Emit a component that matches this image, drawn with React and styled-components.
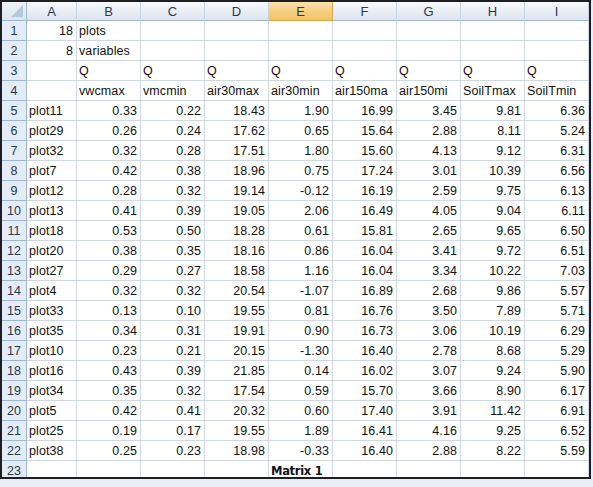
import React from "react";
import styled, { createGlobalStyle } from "styled-components";

const Global = createGlobalStyle`
  html, body { margin: 0; padding: 0; background: #e9eef6; }
  body { font-family: "Liberation Sans", Arial, sans-serif; }
`;

const Frame = styled.div`
  width: 587px;
  height: 475px;
  border: 2px solid #1e1e24;
  overflow: hidden;
  background: #fff;
`;

const Grid = styled.div`
  display: grid;
  grid-template-columns: 25px 50px repeat(8, 64px);
  grid-template-rows: 19px;
  grid-auto-rows: 20px;
`;

const ColHead = styled.div`
  box-sizing: border-box;
  border-right: 1px solid ${(p) => (p.$sel ? "#e2a73f" : "#c5d2e2")};
  border-bottom: 1px solid ${(p) => (p.$sel ? "#e2a73f" : "#9eb6ce")};
  background: ${(p) =>
    p.$sel
      ? "linear-gradient(#fbe2ae, #f6cd7e 55%, #f3c469)"
      : "linear-gradient(#f7f9fc, #e9eef5 55%, #dde4ee)"};
  color: #2a3a4d;
  font-size: 13px;
  display: flex;
  align-items: center;
  justify-content: center;
`;

const Corner = styled.div`
  box-sizing: border-box;
  border-right: 1px solid #9eb6ce;
  border-bottom: 1px solid #9eb6ce;
  background: linear-gradient(#eef2f8, #dde5ef);
  position: relative;
  &::after {
    content: "";
    position: absolute;
    right: 3px;
    bottom: 3px;
    width: 0;
    height: 0;
    border-left: 12px solid transparent;
    border-bottom: 12px solid #b7c8da;
  }
`;

const RowHead = styled.div`
  box-sizing: border-box;
  border-right: 1px solid #9eb6ce;
  border-bottom: 1px solid #9eb6ce;
  background: #e4ecf7;
  color: #2a3a4d;
  font-size: 12.5px;
  display: flex;
  align-items: center;
  justify-content: center;
`;

const Cell = styled.div`
  box-sizing: border-box;
  border-right: 1px solid #d0d7e5;
  border-bottom: 1px solid #d0d7e5;
  color: #111;
  font-size: ${(p) => (p.$bold ? "11.5px" : "12.5px")};
  font-weight: ${(p) => (p.$bold ? 700 : 400)};
  font-family: ${(p) =>
    p.$bold ? '"DejaVu Sans", Verdana, sans-serif' : '"Liberation Sans", Arial, sans-serif'};
  letter-spacing: ${(p) => (p.$bold ? "-0.3px" : "0.1px")};
  display: flex;
  align-items: center;
  justify-content: ${(p) => (p.$num ? "flex-end" : "flex-start")};
  padding: 0 3px 0 2px;
  white-space: nowrap;
  overflow: visible;
`;

const cols = ["A", "B", "C", "D", "E", "F", "G", "H", "I"];

const data = [
  ["plot11", "0.33", "0.22", "18.43", "1.90", "16.99", "3.45", "9.81", "6.36"],
  ["plot29", "0.26", "0.24", "17.62", "0.65", "15.64", "2.88", "8.11", "5.24"],
  ["plot32", "0.32", "0.28", "17.51", "1.80", "15.60", "4.13", "9.12", "6.31"],
  ["plot7", "0.42", "0.38", "18.96", "0.75", "17.24", "3.01", "10.39", "6.56"],
  ["plot12", "0.28", "0.32", "19.14", "-0.12", "16.19", "2.59", "9.75", "6.13"],
  ["plot13", "0.41", "0.39", "19.05", "2.06", "16.49", "4.05", "9.04", "6.11"],
  ["plot18", "0.53", "0.50", "18.28", "0.61", "15.81", "2.65", "9.65", "6.50"],
  ["plot20", "0.38", "0.35", "18.16", "0.86", "16.04", "3.41", "9.72", "6.51"],
  ["plot27", "0.29", "0.27", "18.58", "1.16", "16.04", "3.34", "10.22", "7.03"],
  ["plot4", "0.32", "0.32", "20.54", "-1.07", "16.89", "2.68", "9.86", "5.57"],
  ["plot33", "0.13", "0.10", "19.55", "0.81", "16.76", "3.50", "7.89", "5.71"],
  ["plot35", "0.34", "0.31", "19.91", "0.90", "16.73", "3.06", "10.19", "6.29"],
  ["plot10", "0.23", "0.21", "20.15", "-1.30", "16.40", "2.78", "8.68", "5.29"],
  ["plot16", "0.43", "0.39", "21.85", "0.14", "16.02", "3.07", "9.24", "5.90"],
  ["plot34", "0.35", "0.32", "17.54", "0.59", "15.70", "3.66", "8.90", "6.17"],
  ["plot5", "0.42", "0.41", "20.32", "0.60", "17.40", "3.91", "11.42", "6.91"],
  ["plot25", "0.19", "0.17", "19.55", "1.89", "16.41", "4.16", "9.25", "6.52"],
  ["plot38", "0.25", "0.23", "18.98", "-0.33", "16.40", "2.88", "8.22", "5.59"],
];

const headers = ["vwcmax", "vmcmin", "air30max", "air30min", "air150ma", "air150mi", "SoilTmax", "SoilTmin"];

function buildRows() {
  const rows = [];
  rows.push([{ v: "18", num: true }, { v: "plots" }, ...Array(7).fill({ v: "" })]);
  rows.push([{ v: "8", num: true }, { v: "variables" }, ...Array(7).fill({ v: "" })]);
  rows.push([{ v: "" }, ...Array(8).fill({ v: "Q" })]);
  rows.push([{ v: "" }, ...headers.map((h) => ({ v: h }))]);
  data.forEach((r) => rows.push([{ v: r[0] }, ...r.slice(1).map((x) => ({ v: x, num: true }))]));
  rows.push([
    { v: "" }, { v: "" }, { v: "" }, { v: "" },
    { v: "Matrix 1", bold: true },
    { v: "" }, { v: "" }, { v: "" }, { v: "" },
  ]);
  return rows;
}

export default function App() {
  const rows = buildRows();
  return (
    <>
      <Global />
      <Frame>
        <Grid>
          <Corner />
          {cols.map((c) => (
            <ColHead key={c} $sel={c === "E"}>{c}</ColHead>
          ))}
          {rows.map((r, i) => (
            <React.Fragment key={i}>
              <RowHead>{i + 1}</RowHead>
              {r.map((cell, j) => (
                <Cell key={j} $num={cell.num} $bold={cell.bold}>{cell.v}</Cell>
              ))}
            </React.Fragment>
          ))}
        </Grid>
      </Frame>
    </>
  );
}
